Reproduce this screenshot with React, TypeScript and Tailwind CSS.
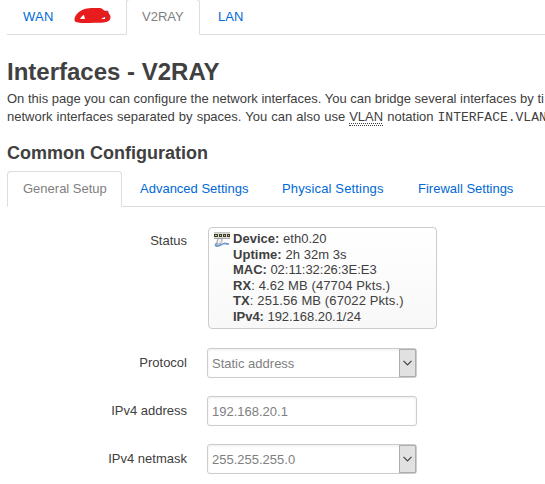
import React from "react";

function Tab({ label, active, className }: { label: string; active?: boolean; className: string }) {
  return (
    <a
      className={
        (active
          ? "rounded-t border border-[#ddd] border-b-white bg-white text-[#808080] "
          : "border border-transparent text-[#0069d6] ") +
        "-mb-px flex h-[36px] shrink-0 items-center pl-[15px] whitespace-nowrap " +
        className
      }
    >
      {label}
    </a>
  );
}

function Row({ label, children }: { label: string; children: React.ReactNode }) {
  return (
    <div className="mb-[18px] flex">
      <label className="w-[187px] shrink-0 pt-[6px] text-right leading-[18px]">{label}</label>
      <div className="ml-[20px]">{children}</div>
    </div>
  );
}

function Field({ value, select }: { value: string; select?: boolean }) {
  return (
    <div className="flex h-[30px] w-[210px] items-center justify-between rounded-[3px] border border-[#ccc] bg-white pl-1 text-[#808080] shadow-[inset_0_1px_3px_rgba(0,0,0,0.08)]">
      <span className="pt-px">{value}</span>
      {select && (
        <span className="flex h-[28px] w-[17px] items-center justify-center border border-[#adadad] bg-[#e1e1e1]">
          <svg width="9" height="6" viewBox="0 0 9 6" fill="none" stroke="#444" strokeWidth="1.2">
            <path d="M.5.8 4.5 4.8 8.5.8" />
          </svg>
        </span>
      )}
    </div>
  );
}

function EthernetIcon() {
  return (
    <svg className="mt-[1px] h-4 w-4 shrink-0" viewBox="0 0 16 16">
      <path d="M0 0h16v7H0z" fill="#deded8" />
      <path d="M0 .5h16" stroke="#c4c4c0" />
      <path d="M0 2h4v3H0zM5 2h3v3H5zM9 2h3v3H9zM13 2h3v3h-3z" fill="#3a3a2c" />
      <path d="M1 3h2v1H1zM6 3h1v1H6zM10 3h1v1h-1zM14 3h1v1h-1z" fill="#d8ce82" />
      <path d="M0 6.5h16" stroke="#a8a8a4" />
      <path d="M4 6.5h4v3L6 12H3V9.500z" fill="#f0f0f0" stroke="#909498" strokeWidth=".9" />
      <path d="M3 11.500c-2 .5-2 2.500 0 2.500 3 0 5-2 7-2.500 2-.4 2 1 5 .3" fill="none" stroke="#6f98cc" strokeWidth="1.8" />
    </svg>
  );
}

const stats = [
  ["Device:", " eth0.20", "tracking-[0.02px]"],
  ["Uptime:", " 2h 32m 3s", "tracking-[0.05px]"],
  ["MAC:", " 02:11:32:26:3E:E3", "tracking-[-0.03px]"],
  ["RX", ": 4.62 MB (47704 Pkts.)", "tracking-[0.1px]"],
  ["TX", ": 251.56 MB (67022 Pkts.)", "tracking-[0.11px]"],
  ["IPv4:", " 192.168.20.1/24", "tracking-[-0.04px]"],
];

export default function App() {
  return (
    <div className="h-[484px] w-[545px] overflow-hidden bg-white pl-[7px] font-['Liberation_Sans',Arial,sans-serif] text-[13px] leading-[18px] text-[#404040]">
      <nav className="flex h-[35px] items-end border-b border-[#ddd]">
        <Tab label="WAN" className="w-[65px] tracking-[0.3px]" />
        <div className="flex h-[35px] w-[54px] shrink-0 items-start pt-[9px]">
          <svg width="38" height="16" viewBox="0 0 38 16" className="ml-[2px]">
            <path
              d="M.5 12C0 7 7 1 13 .5c4-.7 9-.8 14-.3 2 .2 2 2 4 2.500h3l1 3c2 2 2 5 0 7-3 2-7 2-12 2-8 0-14 1-20-.5C1.500 14 .5 13 .5 12Z"
              fill="#e81b1d"
            />
            <path d="M6 11c1-2 3-4 4-4l1 4ZM27 11l4-2v2Z" fill="#fff" />
            <path d="M33 3l1 1M31 9h1v1" stroke="#4267b4" fill="none" />
          </svg>
        </div>
        <Tab label="V2RAY" active className="w-[74px]" />
        <Tab label="LAN" className="ml-[2px] w-[60px]" />
      </nav>

      <h2 className="mt-[19px] h-[36px] text-[24px] leading-[36px] font-bold">Interfaces - V2RAY</h2>
      <p className="h-[36px] whitespace-nowrap">
        On this page you can configure the network interfaces. You can bridge several interfaces by ti
        <br />
        <span className="[word-spacing:0.44px]">
          network interfaces separated by spaces. You can also use{" "}
          <abbr className="border-b border-dotted border-[#404040] pb-px underline decoration-dotted decoration-1 underline-offset-[2px]">
            VLAN
          </abbr>{" "}
          notation{" "}
        </span>
        <code className="font-['Courier_New','Liberation_Mono',monospace] text-[13px]">INTERFACE.VLAN</code>
      </p>

      <h3 className="mt-[9px] h-[36px] text-[18px] leading-[36px] font-bold">Common Configuration</h3>
      <nav className="flex h-[36px] items-end border-b border-[#ddd]">
        <Tab label="General Setup" active className="w-[115px]" />
        <Tab label="Advanced Settings" className="ml-[2px] w-[140px]" />
        <Tab label="Physical Settings" className="ml-[2px] w-[134px] tracking-[0.15px]" />
        <Tab label="Firewall Settings" className="ml-[2px] w-[128px]" />
      </nav>

      <form className="-ml-[7px] mt-[20px]">
        <div className="flex h-[121px]">
          <div className="w-[187px] shrink-0 pt-[5px] text-right">Status</div>
          <div className="ml-[21px] flex h-[102px] w-[229px] rounded border border-[#ccc] bg-gradient-to-b from-white to-[#f8f8f8] pt-[3px] pl-[5px]">
            <EthernetIcon />
            <div className="ml-[3px] text-[13px] leading-[15.6px] whitespace-nowrap">
              {stats.map(([name, value, tracking]) => (
                <div key={name} className={tracking}>
                  <strong>{name}</strong>
                  {value}
                </div>
              ))}
            </div>
          </div>
        </div>
        <Row label="Protocol"><Field value="Static address" select /></Row>
        <Row label="IPv4 address"><Field value="192.168.20.1" /></Row>
        <Row label="IPv4 netmask"><Field value="255.255.255.0" select /></Row>
      </form>
    </div>
  );
}
